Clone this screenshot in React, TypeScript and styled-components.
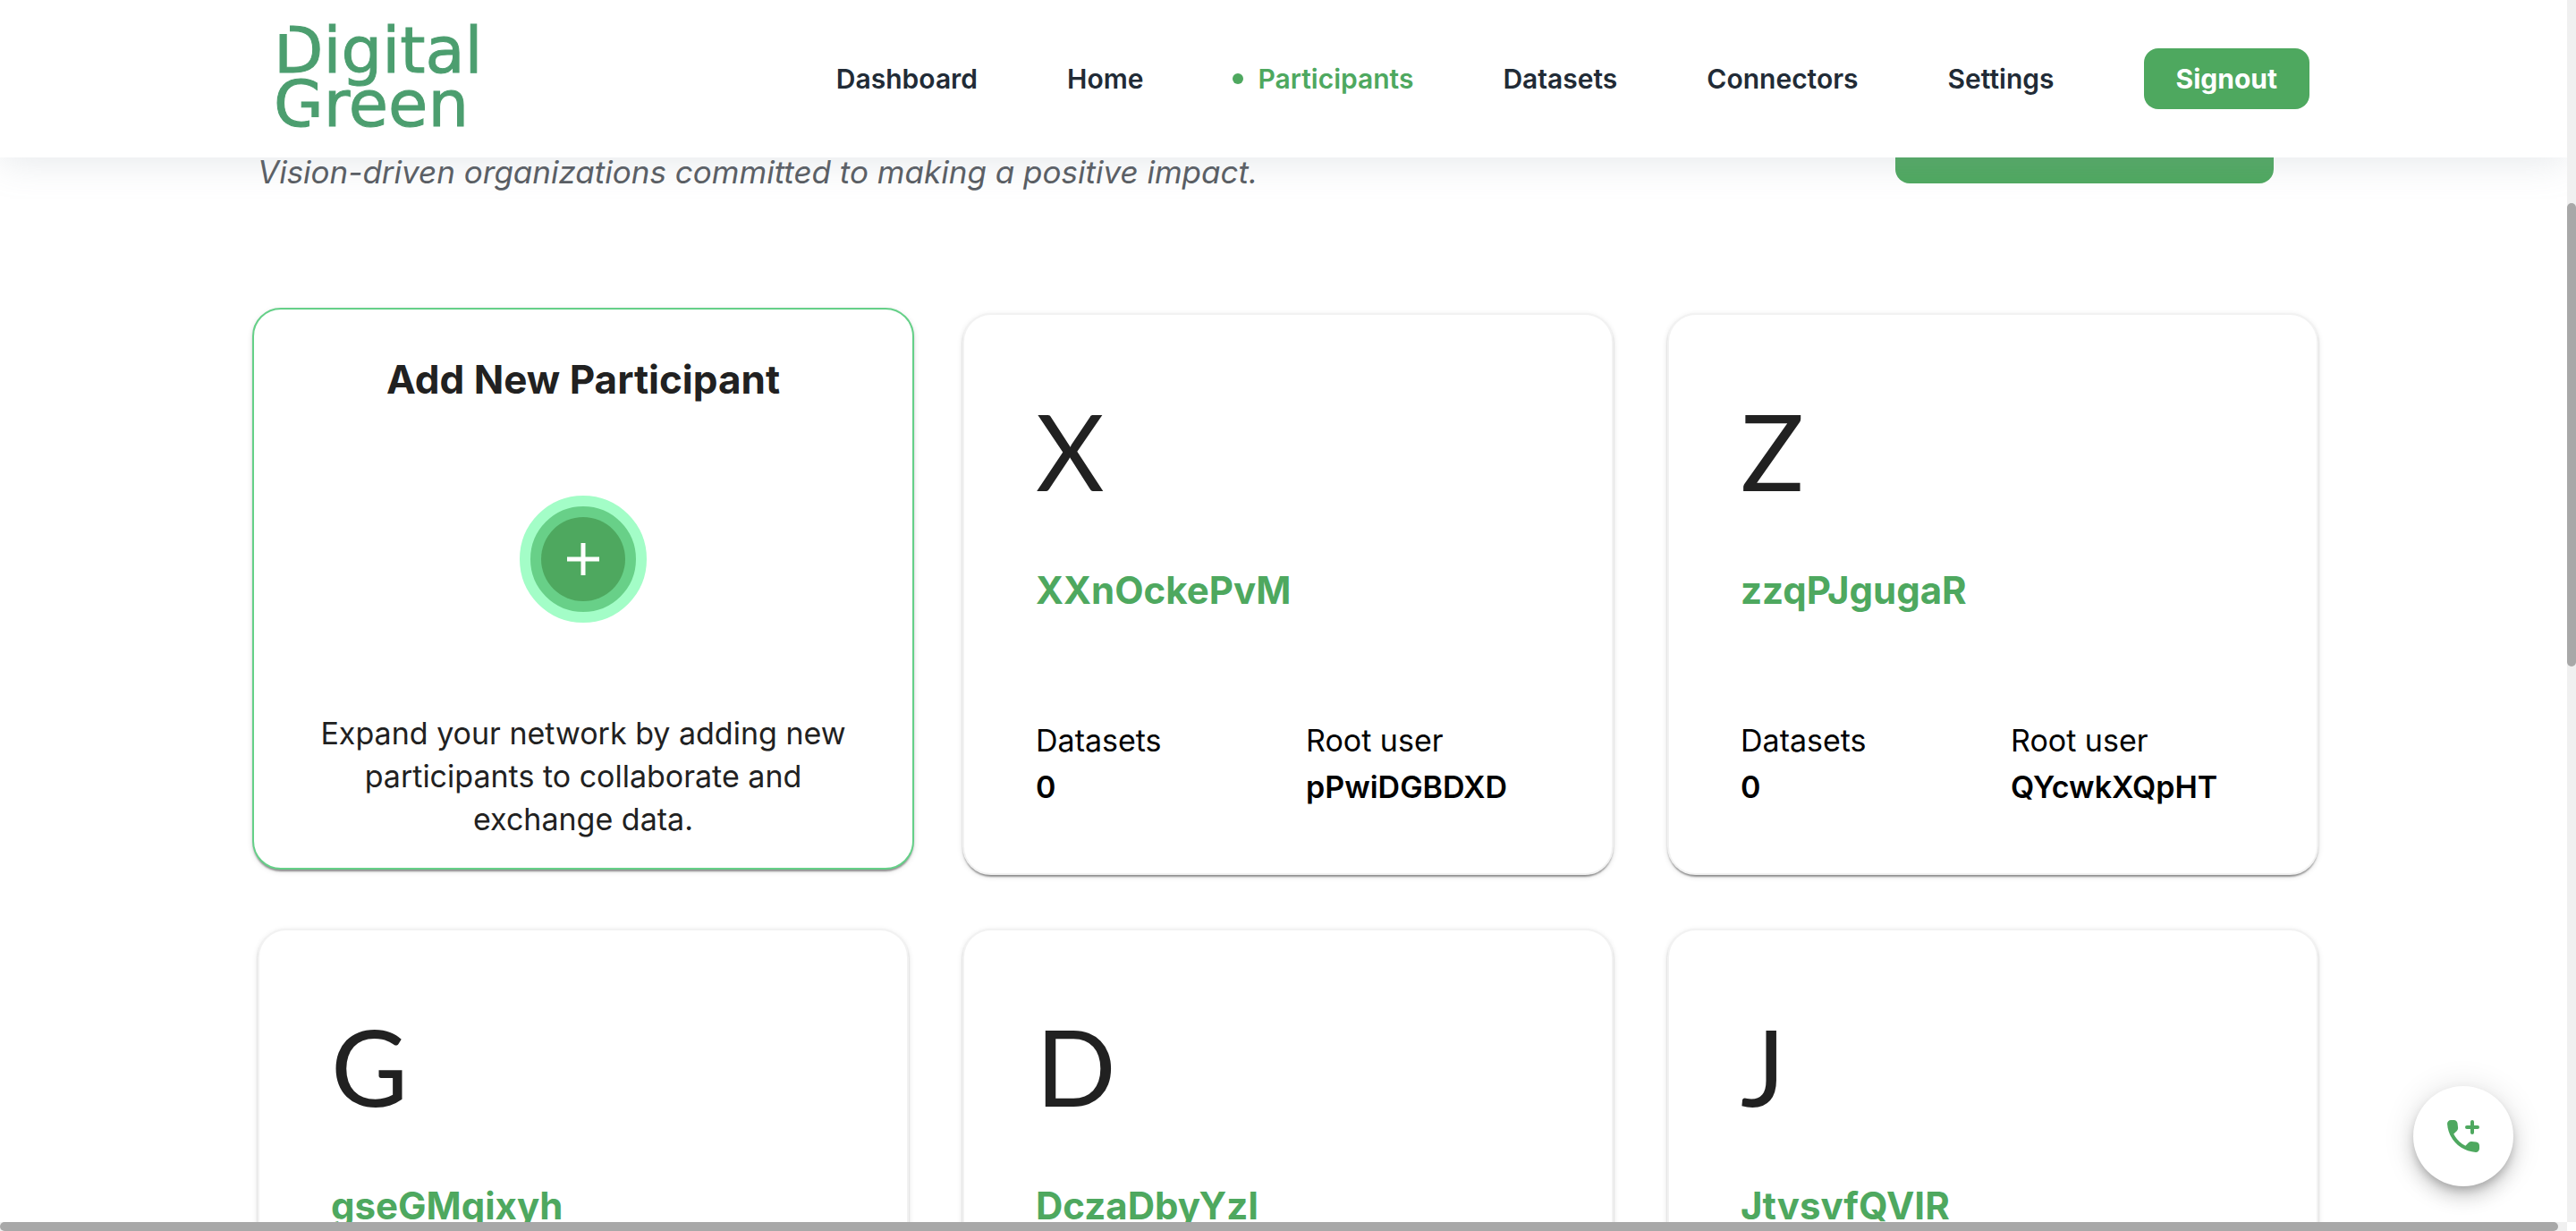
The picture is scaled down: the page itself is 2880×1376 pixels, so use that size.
import React from "react";
import styled, { createGlobalStyle } from "styled-components";

const GREEN = "#4ea85f";
const FONT = `Inter, "Noto Sans", "Liberation Sans", sans-serif`;

const GlobalStyle = createGlobalStyle`
  *, *::before, *::after { box-sizing: border-box; }
  body { margin: 0; background: #fff; font-family: ${FONT}; }
`;

const Shell = styled.div`
  display: grid;
  grid-template-columns: minmax(0, 1fr) 10px;
  grid-template-rows: minmax(0, 1fr) 10px;
  height: 100vh;
  overflow: hidden;
`;

const Viewport = styled.div`
  position: relative;
  overflow: hidden;
`;

const Track = styled.div`
  background: #f0f0f0;
`;

const VerticalTrack = styled(Track)`
  padding-top: 227px;
`;

const HorizontalTrack = styled(Track)`
  padding-right: 10px;
`;

const Thumb = styled.div<{ $length: string }>`
  height: ${(p) => p.$length};
  border-radius: 5px;
  background: #a8a8a8;
`;

const Header = styled.header`
  position: relative;
  z-index: 2;
  display: flex;
  align-items: center;
  justify-content: space-between;
  height: 176px;
  padding: 0 288px;
  background: #fff;
  box-shadow: 0 4px 40px rgba(145, 158, 171, 0.24);
`;

const LogoLink = styled.a`
  display: block;
  padding-left: 18px;
`;

const Logo = styled.svg`
  display: block;
  overflow: visible;
`;

const Nav = styled.nav`
  display: flex;
  align-items: center;
  gap: 100px;
`;

const NavLink = styled.a<{ $active?: boolean }>`
  display: flex;
  align-items: center;
  gap: 16px;
  color: ${(p) => (p.$active ? GREEN : "#212b36")};
  font-size: 30px;
  font-weight: 600;
  line-height: 40px;
  text-decoration: none;
`;

const Dot = styled.span`
  width: 12px;
  height: 12px;
  border-radius: 50%;
  background: ${GREEN};
`;

const SignoutButton = styled.button`
  padding: 14px 36px;
  border: 0;
  border-radius: 16px;
  background: ${GREEN};
  color: #fff;
  font-family: inherit;
  font-size: 30px;
  font-weight: 700;
  line-height: 40px;
`;

const Main = styled.main`
  padding: 0 278px 0 288px;
`;

const Intro = styled.section`
  display: flex;
  align-items: flex-end;
  justify-content: space-between;
  height: 80px;
  margin-top: -40px;
  padding-right: 50px;
`;

const Tagline = styled.p`
  margin: 0;
  color: #585c62;
  font-size: 35px;
  font-style: italic;
  line-height: 48px;
`;

const IntroButton = styled.button`
  width: 423px;
  height: 96px;
  margin-bottom: 11px;
  border: 0;
  border-radius: 16px;
  background: ${GREEN};
`;

const Cards = styled.section`
  display: grid;
  grid-template-columns: repeat(3, minmax(0, 1fr));
  gap: 60px;
  padding-top: 134px;
`;

const Card = styled.article`
  min-height: 628px;
  padding: 80px 80px 60px;
  border: 2px solid #f2f2f2;
  border-radius: 32px;
  background: #fff;
  box-shadow:
    0 4px 2px -2px rgba(0, 0, 0, 0.26),
    0 2px 2px rgba(0, 0, 0, 0.18),
    0 2px 6px rgba(0, 0, 0, 0.12);
`;

const AddCard = styled(Card)`
  display: flex;
  flex-direction: column;
  align-items: center;
  justify-content: space-between;
  margin: -6px -6px 6px;
  padding: 54px 60px 30px;
  border-color: #65d088;
  text-align: center;
`;

const AddTitle = styled.h2`
  margin: 0 0 6px;
  color: #212121;
  font-size: 44px;
  font-weight: 700;
  line-height: 48px;
`;

const AddButton = styled.button`
  display: grid;
  place-items: center;
  width: 142px;
  height: 142px;
  padding: 0;
  border: 12px solid #a3fdc7;
  border-radius: 50%;
  background: #68d088;
`;

const AddDisc = styled.span`
  display: grid;
  place-items: center;
  width: 94px;
  height: 94px;
  border-radius: 50%;
  background: ${GREEN};
`;

const AddText = styled.p`
  margin: 0;
  color: #212121;
  font-size: 34px;
  line-height: 48px;
`;

const Initial = styled.div`
  color: #212121;
  font-family: Lato, ${FONT};
  font-size: 118px;
  font-weight: 400;
  line-height: 144px;
`;

const Name = styled.h3`
  margin: 60px 0 0;
  color: ${GREEN};
  font-size: 42px;
  font-weight: 700;
  line-height: 48px;
`;

const Stats = styled.dl`
  display: grid;
  grid-template-columns: 1fr 1fr;
  gap: 40px;
  margin: 118px 0 0;
`;

const StatLabel = styled.dt`
  color: #000;
  font-size: 34px;
  line-height: 52px;
`;

const StatValue = styled.dd`
  margin: 0;
  color: #000;
  font-size: 34px;
  font-weight: 600;
  line-height: 52px;
`;

const CallButton = styled.button`
  position: absolute;
  right: 60px;
  bottom: 40px;
  z-index: 3;
  display: grid;
  place-items: center;
  width: 112px;
  height: 112px;
  padding: 0;
  border: 0;
  border-radius: 50%;
  background: #fff;
  color: ${GREEN};
  box-shadow:
    0 6px 10px -2px rgba(0, 0, 0, 0.2),
    0 12px 20px rgba(0, 0, 0, 0.14),
    0 2px 36px rgba(0, 0, 0, 0.12);
`;

type Participant = { name: string; datasets?: number; rootUser?: string };

const participants: Participant[] = [
  { name: "XXnOckePvM", datasets: 0, rootUser: "pPwiDGBDXD" },
  { name: "zzqPJgugaR", datasets: 0, rootUser: "QYcwkXQpHT" },
  { name: "gseGMqixyh" },
  { name: "DczaDbyYzI" },
  { name: "JtvsvfQVIR" },
];

const links = ["Dashboard", "Home", "Participants", "Datasets", "Connectors", "Settings"];

function AddCallIcon() {
  return (
    <svg width="48" height="48" viewBox="0 0 24 24" fill="currentColor">
      <path d="M19.23 15.26l-2.54-.29c-.61-.07-1.21.14-1.64.57l-1.84 1.84c-2.83-1.44-5.15-3.75-6.59-6.59l1.85-1.85c.43-.43.64-1.03.57-1.64l-.29-2.52c-.12-1.01-.97-1.77-1.99-1.77H5.03c-1.13 0-2.07.94-2 2.07.53 8.54 7.36 15.36 15.89 15.89 1.13.07 2.07-.87 2.07-2v-1.73c.01-1.01-.75-1.86-1.76-1.98z" />
      <path d="M17 4v6M14 7h6" stroke="currentColor" strokeWidth="2" strokeLinecap="round" />
    </svg>
  );
}

function ParticipantCard({ name, datasets, rootUser }: Participant) {
  return (
    <Card>
      <Initial>{name[0].toUpperCase()}</Initial>
      <Name>{name}</Name>
      {rootUser && (
        <Stats>
          <div>
            <StatLabel>Datasets</StatLabel>
            <StatValue>{datasets}</StatValue>
          </div>
          <div>
            <StatLabel>Root user</StatLabel>
            <StatValue>{rootUser}</StatValue>
          </div>
        </Stats>
      )}
    </Card>
  );
}

export default function App() {
  return (
    <>
      <GlobalStyle />
      <Shell>
        <Viewport>
          <Header>
            <LogoLink href="#home" aria-label="Digital Green">
              <Logo width="310" height="116" viewBox="0 0 310 116">
                <g
                  fill="#4c9e6f"
                  stroke="#4c9e6f"
                  strokeWidth="1"
                  fontFamily="DejaVu Sans, sans-serif"
                  fontSize="72"
                >
                  <text x="0" y="51">Digital</text>
                  <text x="0" y="111">Green</text>
                </g>
                {/* the cut corners of the wordmark's D and G */}
                <path fill="#fff" d="M4 -4h14v12h-14zM40 101h14v14h-14z" />
              </Logo>
            </LogoLink>
            <Nav>
              {links.map((label) => {
                const active = label === "Participants";
                return (
                  <NavLink key={label} href={`#${label.toLowerCase()}`} $active={active}>
                    {active && <Dot />}
                    {label}
                  </NavLink>
                );
              })}
              <SignoutButton type="button">Signout</SignoutButton>
            </Nav>
          </Header>
          <Main>
            <Intro>
              <Tagline>Vision-driven organizations committed to making a positive impact.</Tagline>
              <IntroButton type="button" />
            </Intro>
            <Cards>
              <AddCard>
                <AddTitle>Add New Participant</AddTitle>
                <AddButton type="button" aria-label="Add New Participant">
                  <AddDisc>
                    <svg width="36" height="36" viewBox="0 0 36 36" stroke="#fff" strokeWidth="5">
                      <path d="M18 0v36M0 18h36" />
                    </svg>
                  </AddDisc>
                </AddButton>
                <AddText>
                  Expand your network by adding new participants to collaborate and exchange data.
                </AddText>
              </AddCard>
              {participants.map((p) => (
                <ParticipantCard key={p.name} {...p} />
              ))}
            </Cards>
          </Main>
          <CallButton type="button" aria-label="Call">
            <AddCallIcon />
          </CallButton>
        </Viewport>
        <VerticalTrack>
          <Thumb $length="518px" />
        </VerticalTrack>
        <HorizontalTrack>
          <Thumb $length="10px" />
        </HorizontalTrack>
      </Shell>
    </>
  );
}
